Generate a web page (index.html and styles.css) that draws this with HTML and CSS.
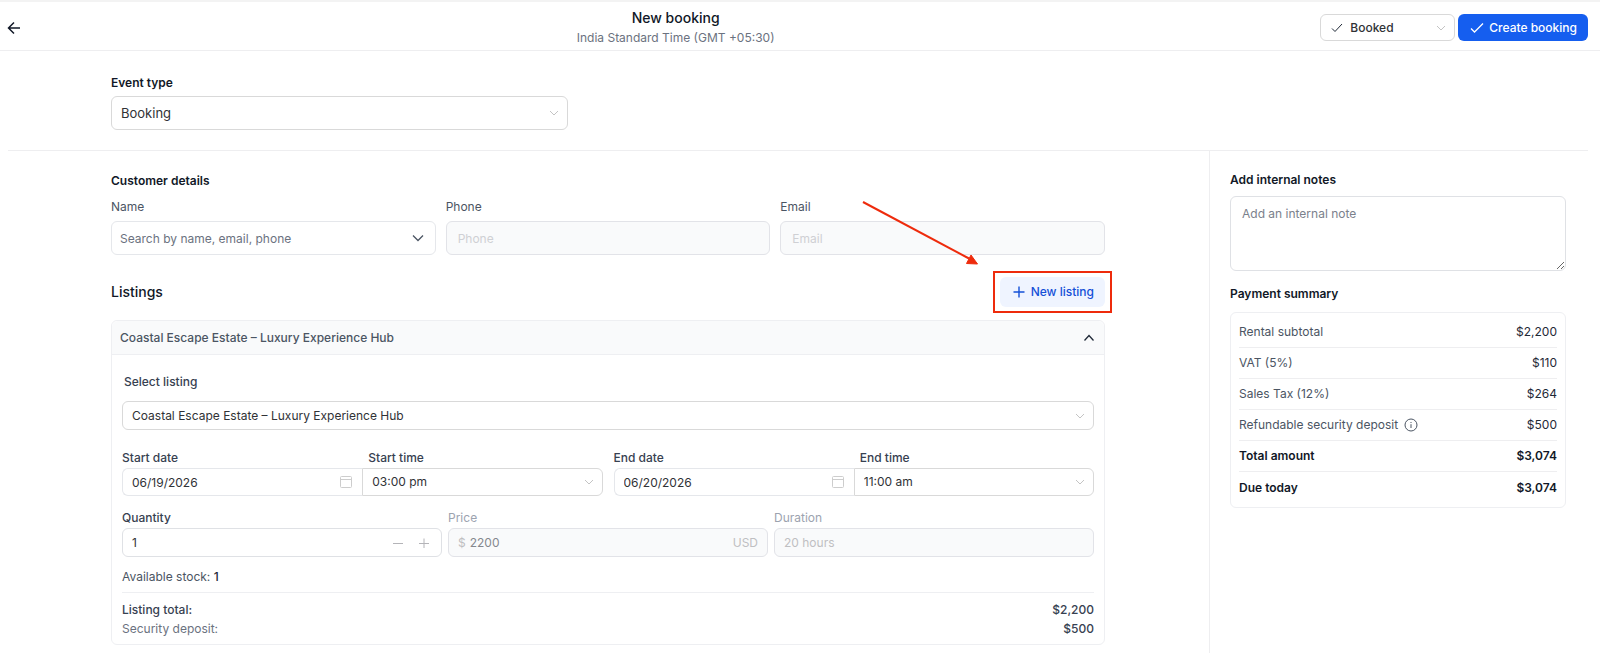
FILE: index.html
```html
<!DOCTYPE html>
<html lang="en">
<head>
    <meta charset="UTF-8">
    <meta name="viewport" content="width=device-width, initial-scale=1.0">
    <title>New booking</title>
    <link rel="stylesheet" href="styles.css">
</head>
<body>
    <header class="header">
        <button class="back-button" type="button" aria-label="Back">
            <svg width="14" height="14" viewBox="0 0 14 14"><path d="M7 1.5 1.5 7 7 12.5M1.5 7H13"/></svg>
        </button>
        <div class="header-title">
            <h1>New booking</h1>
            <p>India Standard Time (GMT +05:30)</p>
        </div>
        <div class="header-actions">
            <div class="control status">
                <svg class="status-check" width="12" height="12" viewBox="0 0 12 12"><path d="M1 6.5 4 9.5 11 2"/></svg>
                <select class="field" aria-label="Status">
                    <option>Booked</option>
                </select>
                <svg class="chevron" width="10" height="10" viewBox="0 0 10 10"><path d="M1 3 5 7 9 3"/></svg>
            </div>
            <button class="primary-button" type="button">
                <svg width="14" height="14" viewBox="0 0 14 14"><path d="M1 7.5 4.5 11 13 2.5"/></svg>
                Create booking
            </button>
        </div>
    </header>

    <section class="event-section">
        <label class="section-title" for="event-type">Event type</label>
        <div class="control event-type">
            <select class="field tall" id="event-type">
                <option>Booking</option>
            </select>
            <svg class="chevron" width="10" height="10" viewBox="0 0 10 10"><path d="M1 3 5 7 9 3"/></svg>
        </div>
    </section>

    <div class="layout">
        <main class="main">
            <h2 class="section-title">Customer details</h2>
            <div class="customer-grid">
                <div>
                    <label class="label" for="name">Name</label>
                    <div class="control">
                        <input class="field tall search" id="name" type="text" placeholder="Search by name, email, phone">
                        <svg class="chevron dark" width="12" height="12" viewBox="0 0 12 12"><path d="M1 3.5 6 8.5 11 3.5"/></svg>
                    </div>
                </div>
                <div>
                    <label class="label" for="phone">Phone</label>
                    <input class="field tall contact" id="phone" type="tel" placeholder="Phone" disabled>
                </div>
                <div>
                    <label class="label" for="email">Email</label>
                    <input class="field tall contact" id="email" type="email" placeholder="Email" disabled>
                </div>
            </div>

            <div class="listings-bar">
                <h2>Listings</h2>
                <div class="new-listing">
                    <button class="light-button" type="button">
                        <svg width="12" height="12" viewBox="0 0 12 12"><path d="M6 .5v11M.5 6h11"/></svg>
                        New listing
                    </button>
                    <!-- Callout pointing at the button -->
                    <div class="highlight"></div>
                    <svg class="arrow" width="118" height="66" viewBox="0 0 118 66">
                        <path class="arrow-line" d="M2 2 108 58.5"/>
                        <path class="arrow-head" d="M110 55 116.500 64 105.500 63.500Z"/>
                    </svg>
                </div>
            </div>

            <section class="card">
                <div class="card-header">
                    <h3>Coastal Escape Estate – Luxury Experience Hub</h3>
                    <button class="icon-button" type="button" aria-label="Collapse">
                        <svg width="12" height="12" viewBox="0 0 12 12"><path d="M1.5 8.5 6 3.5 10.5 8.5"/></svg>
                    </button>
                </div>
                <div class="card-body">
                    <label class="label strong inset" for="listing">Select listing</label>
                    <div class="control">
                        <select class="field" id="listing">
                            <option>Coastal Escape Estate – Luxury Experience Hub</option>
                        </select>
                        <svg class="chevron" width="10" height="10" viewBox="0 0 10 10"><path d="M1 3 5 7 9 3"/></svg>
                    </div>

                    <div class="date-grid">
                        <div class="date-pair">
                            <div>
                                <label class="label strong" for="start-date">Start date</label>
                                <div class="control">
                                    <input class="field date" id="start-date" type="text" value="06/19/2026">
                                    <svg class="calendar" width="12" height="12" viewBox="0 0 12 12"><rect x=".5" y=".5" width="11" height="11" rx="1"/><path d="M.5 3.5h11"/></svg>
                                </div>
                            </div>
                            <div>
                                <label class="label strong time-label" for="start-time">Start time</label>
                                <div class="control">
                                    <select class="field time" id="start-time">
                                        <option>03:00 pm</option>
                                    </select>
                                    <svg class="chevron" width="10" height="10" viewBox="0 0 10 10"><path d="M1 3 5 7 9 3"/></svg>
                                </div>
                            </div>
                        </div>
                        <div class="date-pair">
                            <div>
                                <label class="label strong" for="end-date">End date</label>
                                <div class="control">
                                    <input class="field date" id="end-date" type="text" value="06/20/2026">
                                    <svg class="calendar" width="12" height="12" viewBox="0 0 12 12"><rect x=".5" y=".5" width="11" height="11" rx="1"/><path d="M.5 3.5h11"/></svg>
                                </div>
                            </div>
                            <div>
                                <label class="label strong time-label" for="end-time">End time</label>
                                <div class="control">
                                    <select class="field time" id="end-time">
                                        <option>11:00 am</option>
                                    </select>
                                    <svg class="chevron" width="10" height="10" viewBox="0 0 10 10"><path d="M1 3 5 7 9 3"/></svg>
                                </div>
                            </div>
                        </div>
                    </div>

                    <div class="amount-grid">
                        <div>
                            <label class="label strong" for="quantity">Quantity</label>
                            <div class="field group quantity">
                                <input class="bare" id="quantity" type="text" value="1">
                                <button class="step-button" type="button" aria-label="Decrease">
                                    <svg width="10" height="10" viewBox="0 0 10 10"><path d="M0 5.5h10"/></svg>
                                </button>
                                <button class="step-button" type="button" aria-label="Increase">
                                    <svg width="10" height="10" viewBox="0 0 10 10"><path d="M0 5.5h10M5 .5v10"/></svg>
                                </button>
                            </div>
                        </div>
                        <div>
                            <label class="label muted" for="price">Price</label>
                            <div class="field group disabled">
                                <span>$</span>
                                <input class="bare price" id="price" type="text" value="2200" disabled>
                                <span>USD</span>
                            </div>
                        </div>
                        <div>
                            <label class="label muted" for="duration">Duration</label>
                            <input class="field" id="duration" type="text" value="20 hours" disabled>
                        </div>
                    </div>

                    <p class="stock">Available stock: <strong>1</strong></p>

                    <dl class="totals">
                        <div class="total-row main-total">
                            <dt>Listing total:</dt>
                            <dd>$2,200</dd>
                        </div>
                        <div class="total-row">
                            <dt>Security deposit:</dt>
                            <dd>$500</dd>
                        </div>
                    </dl>
                </div>
            </section>
        </main>

        <aside class="sidebar">
            <label class="section-title" for="notes">Add internal notes</label>
            <textarea class="notes" id="notes" placeholder="Add an internal note"></textarea>

            <h2 class="section-title">Payment summary</h2>
            <div class="summary">
                <table>
                    <tr><th scope="row">Rental subtotal</th><td>$2,200</td></tr>
                    <tr><th scope="row">VAT (5%)</th><td>$110</td></tr>
                    <tr><th scope="row">Sales Tax (12%)</th><td>$264</td></tr>
                    <tr>
                        <th scope="row">
                            <span class="with-icon">
                                Refundable security deposit
                                <svg width="14" height="14" viewBox="0 0 14 14"><circle cx="7" cy="7" r="6"/><path d="M7 6.2v3.8M7 4v1"/></svg>
                            </span>
                        </th>
                        <td>$500</td>
                    </tr>
                    <tr class="bold"><th scope="row">Total amount</th><td>$3,074</td></tr>
                    <tr class="bold"><th scope="row">Due today</th><td>$3,074</td></tr>
                </table>
            </div>
        </aside>
    </div>
</body>
</html>
```

FILE: styles.css
```css
/* General Styles */
* {
    box-sizing: border-box;
}

body {
    margin: 0;
    min-height: 100vh;
    display: flex;
    flex-direction: column;
    font-family: 'Inter', sans-serif;
    font-size: 12px;
    line-height: 20px;
    color: #1f2937;
    background-color: #fff;
}

h1, h2, h3, p, dl, dd {
    margin: 0;
}

button, input, select, textarea {
    font: inherit;
    color: inherit;
}

button {
    padding: 0;
    border: none;
    background: none;
    cursor: pointer;
}

svg {
    display: block;
    flex: none;
    fill: none;
    stroke: currentColor;
}

/* Header Styles */
.header {
    display: flex;
    justify-content: space-between;
    align-items: center;
    padding: 3px 12px 0 7px;
    height: 51px;
    border-top: 2px solid #f3f3f3;
    border-bottom: 1px solid #eeeef0;
}

.back-button {
    width: 24px;
    color: #111827;
    stroke-width: 1.5;
}

.header-title {
    text-align: center;
}

.header-title h1 {
    font-size: 14px;
    font-weight: 500;
    color: #111827;
}

.header-title p {
    color: #6b7280;
}

.header-actions {
    display: flex;
    gap: 3px;
}

.status {
    width: 135px;
    font-weight: 500;
}

.status .field {
    height: 27px;
    padding-left: 29px;
}

.status-check {
    position: absolute;
    left: 11px;
    top: 8px;
}

.primary-button {
    display: flex;
    align-items: center;
    gap: 5px;
    height: 27px;
    padding: 0 11px 0 12px;
    border-radius: 6px;
    font-weight: 500;
    color: #fff;
    background-color: #155eef;
}

.primary-button svg {
    stroke-width: 1.3;
}

/* Form Controls */
.control {
    position: relative;
}

.field {
    display: block;
    width: 100%;
    height: 29px;
    padding: 0 9px;
    border: 1px solid #d9d9d9;
    border-radius: 6px;
    outline: none;
    appearance: none;
    background-color: #fff;
    color: #303236;
}

.field.tall {
    height: 34px;
}

.field.search {
    padding-left: 8px;
    border-color: #e5e7eb;
}

.field.contact {
    padding-left: 11px;
}

.field:disabled,
.field.disabled {
    border-color: #e2e3e8;
    background-color: #f9fafb;
    color: #bfbfc2;
}

.field::placeholder {
    color: #6b7280;
}

.field:disabled::placeholder {
    color: #cfd0d4;
}

.chevron {
    position: absolute;
    right: 9px;
    top: 50%;
    margin-top: -5px;
    color: #c4c4c4;
    pointer-events: none;
}

.chevron.dark {
    right: 12px;
    margin-top: -6px;
    color: #4b5563;
    stroke-width: 1.3;
}

.calendar {
    position: absolute;
    right: 10px;
    top: 8px;
    color: #cdcdcd;
}

.label {
    display: block;
    color: #4b5563;
}

.label.strong {
    font-weight: 500;
    color: #374151;
}

.label.muted {
    color: #9ca3af;
}

.section-title {
    display: block;
    font-size: 12px;
    font-weight: 600;
    color: #111827;
}

/* Event Section */
.event-section {
    margin: 0 12px 0 8px;
    padding: 22px 103px 20px;
    border-bottom: 1px solid #eeeef0;
}

.event-type {
    width: 46%;
    max-width: 457px;
    margin-top: 3px;
}

.event-type .field {
    font-size: 13px;
}

/* Main Content Styles */
.layout {
    flex: 1;
    display: grid;
    grid-template-columns: 1fr 379px;
    padding: 0 12px 0 8px;
}

.main {
    padding: 20px 104px 8px 103px;
}

.customer-grid {
    display: grid;
    grid-template-columns: repeat(3, 1fr);
    gap: 10px;
    margin-top: 6px;
}

.customer-grid .label {
    margin-bottom: 4px;
}

.listings-bar {
    display: flex;
    justify-content: space-between;
    align-items: center;
    margin: 22px 0 13px;
}

.listings-bar h2 {
    font-size: 14px;
    font-weight: 500;
    color: #111827;
}

.new-listing {
    position: relative;
}

.light-button {
    display: flex;
    align-items: center;
    gap: 6px;
    height: 30px;
    padding: 0 11px 0 13px;
    border-radius: 6px;
    font-weight: 500;
    color: #1550d8;
    background-color: #eff4ff;
}

.light-button svg {
    stroke-width: 1.4;
}

.highlight {
    position: absolute;
    inset: -6px -7px;
    border: 2px solid #ee2b0c;
    pointer-events: none;
}

.arrow {
    position: absolute;
    right: 126px;
    bottom: 41px;
    pointer-events: none;
}

.arrow-line {
    stroke: #ee2b0c;
    stroke-width: 2;
}

.arrow-head {
    fill: #ee2b0c;
    stroke: #ee2b0c;
}

/* Listing Card */
.card {
    border: 1px solid #eeeff2;
    border-radius: 6px;
}

.card-header {
    display: flex;
    justify-content: space-between;
    align-items: center;
    height: 34px;
    padding: 0 9px 0 8px;
    border-bottom: 1px solid #eeeff2;
    border-radius: 6px 6px 0 0;
    background-color: #f9fafb;
}

.card-header h3 {
    font-size: 12px;
    font-weight: 500;
    color: #4b5563;
}

.icon-button {
    stroke-width: 1.3;
}

.card-body {
    padding: 17px 10px 6px;
}

.label.inset {
    margin-bottom: 9px;
    padding-left: 2px;
}

.date-grid {
    display: grid;
    grid-template-columns: 1fr 1fr;
    gap: 11px;
    margin: 18px 0 12px;
}

.date-grid .field {
    height: 28px;
}

.date-pair {
    display: grid;
    grid-template-columns: 1fr 1fr;
}

.field.date {
    border-color: #e5e7eb;
    border-right: none;
    border-radius: 6px 0 0 6px;
}

.field.time {
    border-radius: 0 6px 6px 0;
}

.time-label {
    padding-left: 6px;
}

.amount-grid {
    display: grid;
    grid-template-columns: repeat(3, 1fr);
    gap: 6px;
}

.field.group {
    display: flex;
    align-items: center;
    gap: 4px;
}

.field.quantity {
    padding-right: 6px;
    border-color: #dfe1e5;
}

.bare {
    flex: 1;
    min-width: 0;
    padding: 0;
    border: none;
    outline: none;
    background: none;
}

.bare.price {
    color: #85888e;
}

.step-button {
    display: flex;
    justify-content: center;
    width: 22px;
    color: #b4b4b8;
}

.stock {
    margin-top: 10px;
    color: #4b5563;
}

.stock strong {
    font-weight: 500;
    color: #1f2937;
}

.totals {
    margin-top: 5px;
    padding-top: 7px;
    border-top: 1px solid #eeeff2;
    line-height: 19px;
}

.total-row {
    display: flex;
    justify-content: space-between;
    color: #6b7280;
}

.total-row dd,
.main-total dt {
    font-weight: 500;
    color: #374151;
}

/* Sidebar */
.sidebar {
    padding: 19px 22px 0 20px;
    border-left: 1px solid #eeeef0;
}

.notes {
    display: block;
    width: 100%;
    height: 75px;
    margin: 6px 0 13px;
    padding: 7px 11px;
    border: 1px solid #dfe1e5;
    border-radius: 6px;
    outline: none;
    resize: vertical;
}

.notes::placeholder {
    color: #7b818c;
}

.summary {
    margin-top: 8px;
    padding: 4px 8px;
    border: 1px solid #eeeff2;
    border-radius: 6px;
}

.summary table {
    width: 100%;
    border-spacing: 0;
}

.summary th,
.summary td {
    height: 31px;
    padding: 0;
    border-bottom: 1px solid #eeeef0;
    font-weight: 400;
    text-align: left;
    color: #4b5563;
}

.summary td {
    text-align: right;
    color: #1f2937;
}

.summary tr:last-child th,
.summary tr:last-child td {
    border-bottom: none;
}

.summary .bold th,
.summary .bold td {
    font-weight: 600;
    color: #111827;
}

.with-icon {
    display: flex;
    align-items: center;
    gap: 6px;
}
```
